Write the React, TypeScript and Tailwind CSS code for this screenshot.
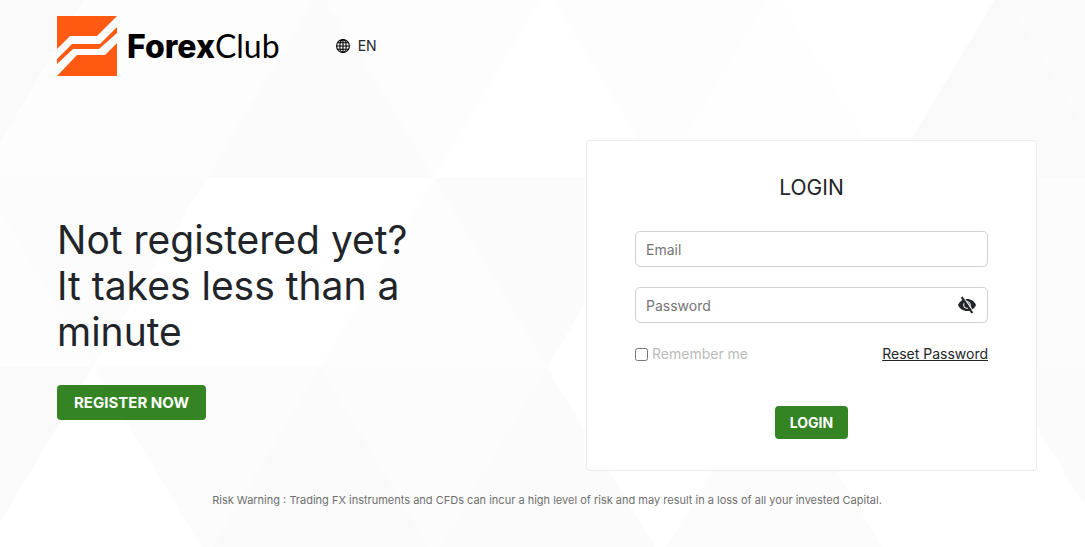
import { useState } from "react"

const INTER = "font-['Inter','Liberation_Sans',sans-serif]"

const shards = [
  { points: "-20,-11 90,-11 -20,178", fill: "#fafafa" },
  { points: "90,-11 320,-11 207,178", fill: "#fdfdfd" },
  { points: "90,-11 -20,178 207,178", fill: "#fdfdfd" },
  { points: "320,-11 207,178 434,178", fill: "#fbfbfb" },
  { points: "320,-11 547,-11 434,178", fill: "#fdfdfd" },
  { points: "547,-11 774,-11 661,178", fill: "#fdfdfd" },
  { points: "774,-11 661,178 888,178", fill: "#fefefe" },
  { points: "1001,-11 888,178 1115,178", fill: "#fafafa" },
  { points: "1001,-11 1115,-11 1115,178", fill: "#fbfbfb" },
  { points: "-20,178 207,178 93,367", fill: "#fcfcfc" },
  { points: "-20,178 93,367 -20,367", fill: "#fdfdfd" },
  { points: "434,178 320,367 547,367", fill: "#fdfdfd" },
  { points: "434,178 661,178 547,367", fill: "#fbfbfb" },
  { points: "1115,178 888,178 1001,367 1115,367", fill: "#fcfcfc" },
  { points: "-20,367 93,367 -20,556", fill: "#fafafa" },
  { points: "93,367 320,367 207,556", fill: "#fcfcfc" },
  { points: "320,367 207,556 434,556", fill: "#fafafa" },
  { points: "320,367 547,367 434,556", fill: "#fcfcfc" },
  { points: "547,367 434,556 661,556", fill: "#fbfbfb" },
  { points: "774,367 661,556 888,556", fill: "#fcfcfc" },
  { points: "1001,367 1115,367 1115,556", fill: "#fbfbfb" },
]

function Backdrop() {
  return (
    <svg
      aria-hidden="true"
      className="absolute inset-0 h-full w-full"
      viewBox="0 0 1085 547"
      preserveAspectRatio="xMidYMin slice"
    >
      {shards.map(s => <polygon key={s.points} points={s.points} fill={s.fill} />)}
    </svg>
  )
}

function Logo() {
  return (
    <a href="#" className="flex items-center gap-2.5 text-black">
      <svg aria-hidden="true" viewBox="0 0 60 60" className="h-15 w-15">
        <path fill="#ff5912" d="M0 0H60L40 20H13L0 33Z" />
        <path fill="#ff5912" d="M0 43L15 28H43L60 11V17L42 33H16L0 48Z" />
        <path fill="#ff5912" d="M0 60L20 39H48L60 27V60Z" />
      </svg>
      <span className="flex items-baseline text-[32px] leading-10">
        <b className="font-extrabold">Forex</b>
        <span className="font-['Lato',sans-serif]">Club</span>
      </span>
    </a>
  )
}

function GlobeIcon() {
  return (
    <svg aria-hidden="true" viewBox="0 0 14 14" className="h-3.5 w-3.5" fill="none" stroke="#000" strokeWidth="1.1">
      <circle cx="7" cy="7" r="6.4" />
      <ellipse cx="7" cy="7" rx="3.2" ry="6.4" />
      <path d="M7 .6v12.8M.6 7h12.8M1.5 3.8h11M1.5 10.2h11" />
    </svg>
  )
}

function EyeOffIcon() {
  return (
    <svg aria-hidden="true" viewBox="0 0 18 18" className="h-[18px] w-[18px]">
      <path fill="#212529" d="M0 9C1.5 5.3 5 3 9 3s7.5 2.300 9 6c-1.500 3.700-5 6-9 6S1.500 12.700 0 9Z" />
      <circle cx="9" cy="9" r="3.4" fill="none" stroke="#fff" strokeWidth="1" />
      <path d="M5.300 .8L15.800 16.200" stroke="#fff" strokeWidth="1.200" />
      <path d="M3.700 1.200L14.300 17" stroke="#212529" strokeWidth="2.200" />
    </svg>
  )
}

const fieldClass =
  "h-9 w-full rounded-[5px] border border-[#d0d2d4] bg-white px-2.5 text-sm text-[#212529] placeholder:text-[#757575] outline-none"

export default function App() {
  const [showPassword, setShowPassword] = useState(false)

  return (
    <div className={`relative min-h-screen overflow-hidden bg-white text-[#212529] ${INTER}`}>
      <Backdrop />

      <div className="relative px-12 pt-4">
        {/* Header */}
        <header className="flex items-center gap-14 pl-[9px]">
          <Logo />
          <button type="button" className="flex items-center gap-2 text-sm">
            <GlobeIcon />
            EN
          </button>
        </header>

        <main className="mt-16 grid grid-cols-[1fr_451px] gap-12">
          {/* Register */}
          <section className="self-center pt-[26px] pl-[9px]">
            <h1 className="max-w-[400px] text-[39px] leading-[46px] font-normal">
              Not registered yet?
              <br />
              It takes less than a minute
            </h1>
            <a
              href="#"
              className="mt-[30px] inline-block rounded bg-[#358423] px-[17px] text-[15px] leading-[35px] font-bold text-white"
            >
              REGISTER NOW
            </a>
          </section>

          {/* Login card */}
          <form
            className="rounded border border-[#ebebeb] bg-white px-12 pt-8 pb-[31px]"
            onSubmit={e => e.preventDefault()}
          >
            <h2 className="text-center text-[21px] leading-[30px]">LOGIN</h2>
            <input aria-label="Email" type="email" placeholder="Email" className={`mt-7 ${fieldClass}`} />
            <div className="relative mt-5">
              <input
                aria-label="Password"
                type={showPassword ? "text" : "password"}
                placeholder="Password"
                className={fieldClass}
              />
              <button
                type="button"
                aria-label="Toggle password visibility"
                className="absolute inset-y-0 right-3"
                onClick={() => setShowPassword(!showPassword)}
              >
                <EyeOffIcon />
              </button>
            </div>
            <div className="mt-5 flex items-center justify-between text-sm leading-[22px]">
              <label className="flex items-center gap-1 text-[#bcbcbc]">
                <input type="checkbox" className="h-[13px] w-[13px]" />
                Remember me
              </label>
              <a href="#" className="underline">Reset Password</a>
            </div>
            <div className="mt-[41px] text-center">
              <button type="submit" className="rounded bg-[#358423] px-[15px] text-sm leading-[33px] font-bold text-white">
                LOGIN
              </button>
            </div>
          </form>
        </main>

        <footer className="mt-5 pl-[9px] text-center text-[11px] leading-[18px] text-[#6f6f6f]">
          Risk Warning : Trading FX instruments and CFDs can incur a high level of risk and may result in a loss of all your invested Capital.
        </footer>
      </div>
    </div>
  )
}
